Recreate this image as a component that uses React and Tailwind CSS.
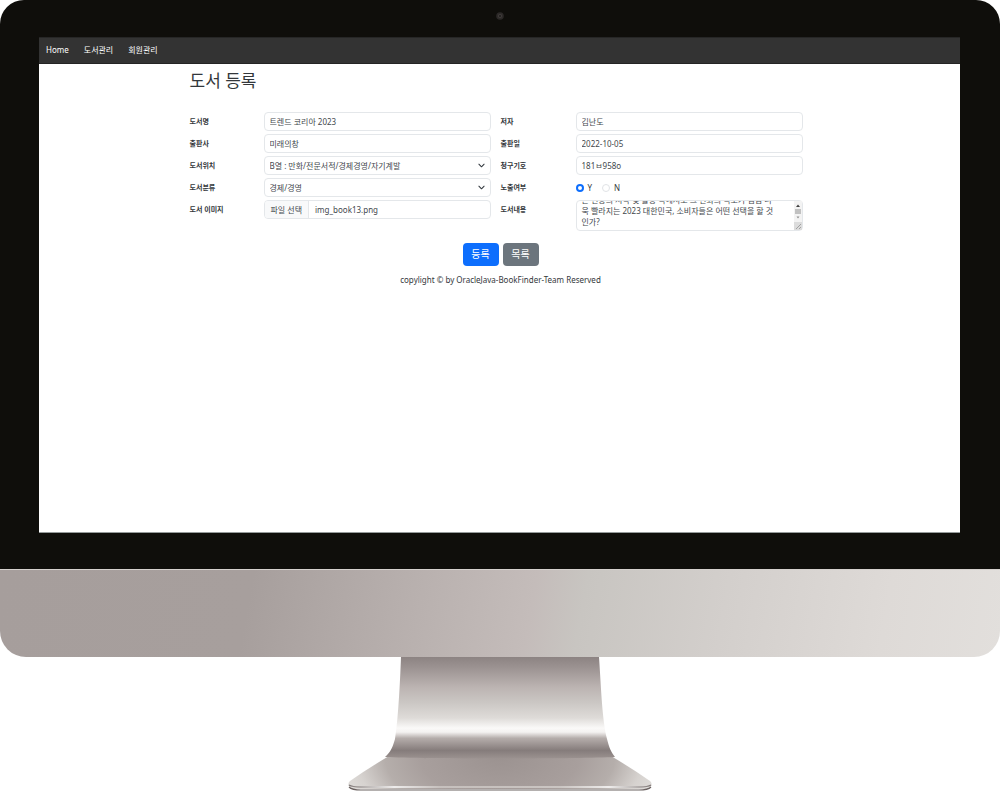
import { useEffect, useRef } from "react";

const control =
  "h-[19px] w-full min-w-0 rounded-[4px] border border-[#e4e7ea] bg-white px-[5px] text-[8px] leading-[12px] text-[#43484d]";

const description =
  "2023년 대한민국의 소비 트렌드를 전망한다.\n른 변동의 시작 및 활동 속에서도 그 변화의 속도가 점점 더\n욱 빨라지는 2023 대한민국, 소비자들은 어떤 선택을 할 것\n인가?";

function FieldLabel({ htmlFor, children }) {
  return (
    <label htmlFor={htmlFor} className="pt-[4px] text-[7px] leading-[12px] font-bold text-[#33373b]">
      {children}
    </label>
  );
}

function SelectField({ id, value }) {
  return (
    <div className="relative">
      <select id={id} defaultValue={value} className={`${control} block appearance-none pr-5`}>
        <option>{value}</option>
      </select>
      <svg viewBox="0 0 16 16" className="pointer-events-none absolute top-1.5 right-1.5 size-[7px]" fill="none" stroke="#343a40" strokeWidth="2.4" strokeLinecap="round" strokeLinejoin="round" aria-hidden="true">
        <path d="m2 5 6 6 6-6" />
      </svg>
    </div>
  );
}

function RadioOption({ id, label, defaultChecked }) {
  return (
    <div className="flex items-center gap-1">
      <input
        id={id}
        type="radio"
        name="visible"
        defaultChecked={defaultChecked}
        className="size-2 appearance-none rounded-full border border-[#e1e3e6] bg-white checked:border-2 checked:border-[#0d6efd]"
      />
      <label htmlFor={id} className="text-[8px] leading-[12px]">{label}</label>
    </div>
  );
}

function Description() {
  const ref = useRef(null);
  useEffect(() => {
    ref.current.scrollTop = ref.current.scrollHeight;
  }, []);
  return (
    <div className="relative">
      <textarea
        id="content"
        ref={ref}
        defaultValue={description}
        className="block h-[31px] w-full resize-none rounded-[4px] border border-[#e4e7ea] py-[3px] pr-[12px] pl-[5px] text-[8px] leading-[11px] text-[#43484d] [scrollbar-width:none]"
      />
      <svg viewBox="0 0 8 29" className="pointer-events-none absolute top-px right-px h-[29px] w-2" aria-hidden="true">
        <rect width="8" height="29" fill="#f3f3f3" />
        <path d="M2 6h4L4 3.500z" fill="#404040" />
        <rect x="1" y="8" width="6" height="5" fill="#c1c1c1" />
        <path d="M2.500 15.500h3L4 17.500z" fill="#909090" />
        <rect y="21" width="8" height="8" fill="#dcdcdc" />
        <path d="M2 28l5-5M5 28l2-2" stroke="#8a8a8a" strokeWidth=".7" />
      </svg>
    </div>
  );
}

function Navbar() {
  return (
    <nav className="flex h-[27px] items-center gap-[15px] border-y border-t-[#262626] border-b-[#242424] bg-[#333] px-[7px] pb-[2px] text-[8px] leading-[12px] text-white">
      <a href="#home">Home</a>
      <a href="#books">도서관리</a>
      <a href="#members">회원관리</a>
    </nav>
  );
}

function BookForm() {
  return (
    <form className="pr-[7px]">
      <div className="grid grid-cols-[64px_1fr_65px_1fr] gap-x-[10px] gap-y-[3px]">
        <FieldLabel htmlFor="title">도서명</FieldLabel>
        <input id="title" className={control} defaultValue="트렌드 코리아 2023" />
        <FieldLabel htmlFor="author">저자</FieldLabel>
        <input id="author" className={control} defaultValue="김난도" />

        <FieldLabel htmlFor="publisher">출판사</FieldLabel>
        <input id="publisher" className={control} defaultValue="미래의창" />
        <FieldLabel htmlFor="date">출판일</FieldLabel>
        <input id="date" className={control} defaultValue="2022-10-05" />

        <FieldLabel htmlFor="place">도서위치</FieldLabel>
        <SelectField id="place" value="B열 : 만화/전문서적/경제경영/자기계발" />
        <FieldLabel htmlFor="code">청구기호</FieldLabel>
        <input id="code" className={control} defaultValue="181ㅂ958o" />

        <FieldLabel htmlFor="category">도서분류</FieldLabel>
        <SelectField id="category" value="경제/경영" />
        <FieldLabel htmlFor="visible-y">노출여부</FieldLabel>
        <div className="flex items-center gap-[10px]">
          <RadioOption id="visible-y" label="Y" defaultChecked />
          <RadioOption id="visible-n" label="N" />
        </div>

        <FieldLabel htmlFor="image">도서 이미지</FieldLabel>
        <label className="flex h-[19px] overflow-hidden rounded-[4px] border border-[#e4e7ea] text-[8px] leading-[12px] text-[#43484d]">
          <input id="image" type="file" className="sr-only" />
          <span className="flex items-center border-r border-[#e4e7ea] bg-[#f8f9fa] px-[6px]">파일 선택</span>
          <span className="flex items-center px-[6px]">img_book13.png</span>
        </label>
        <FieldLabel htmlFor="content">도서내용</FieldLabel>
        <Description />
      </div>
    </form>
  );
}

function Stand() {
  return (
    <svg viewBox="0 0 306 134" className="mx-auto block h-[134px] w-[306px]" aria-hidden="true">
      <defs>
        <linearGradient id="neck" x1="0" y1="0" x2="0" y2="1">
          <stop offset="0" stopColor="#8c8382" />
          <stop offset=".1" stopColor="#9b9291" />
          <stop offset=".3" stopColor="#bcb4b2" />
          <stop offset=".45" stopColor="#cbc7c4" />
          <stop offset=".6" stopColor="#dedbd8" />
          <stop offset=".7" stopColor="#faf9f8" />
          <stop offset=".74" stopColor="#f4f2f1" />
          <stop offset=".8" stopColor="#b5adab" />
          <stop offset=".92" stopColor="#857c7b" />
          <stop offset="1" stopColor="#9b9290" />
        </linearGradient>
        <radialGradient id="foot" gradientUnits="userSpaceOnUse" cx="0" cy="0" r="1" gradientTransform="translate(153 98) scale(160 90)">
          <stop offset="0" stopColor="#9b9290" />
          <stop offset=".5" stopColor="#a89f9d" />
          <stop offset=".72" stopColor="#b5aeab" />
          <stop offset=".9" stopColor="#d6d2cf" />
          <stop offset="1" stopColor="#dedbd8" />
        </radialGradient>
        <linearGradient id="edge" x1="0" y1="0" x2="1" y2="0">
          <stop offset="0" stopColor="#817978" />
          <stop offset=".15" stopColor="#fff" />
          <stop offset=".3" stopColor="#d0cbc8" />
          <stop offset=".7" stopColor="#d6d2cf" />
          <stop offset=".86" stopColor="#fff" />
          <stop offset="1" stopColor="#817978" />
        </linearGradient>
      </defs>
      <path d="M42 99 Q20 112 3 124c-3 3-2 7 5 8h290c7-1 8-5 5-8Q286 112 264 99z" fill="url(#foot)" />
      <path d="M54 0h198c2 28 3 62 8 82 2 8 4 13 8 18-36 2-194 2-230 0 6-5 8-11 10-18 3-18 5-54 6-82z" fill="url(#neck)" />
      <path d="M2 128c3 2 7 2 12 2h278c6 0 9 0 12-2" fill="none" stroke="url(#edge)" strokeWidth="1.5" />
      <path d="M2 130c3 3 8 3 12 3h278c5 0 9 0 12-3" fill="none" stroke="#6b6261" strokeWidth="1.2" />
    </svg>
  );
}

export default function App() {
  return (
    <div className="min-h-screen bg-white font-['Noto_Sans','Noto_Sans_CJK_KR',sans-serif] text-[#33373b]">
      <div className="rounded-t-[24px] bg-[#0f0e0b] pr-[40px] pb-[36px] pl-[39px]">
        <div className="flex h-[37px] justify-center pt-3">
          <svg viewBox="0 0 8 8" className="size-2" aria-hidden="true">
            <circle cx="4" cy="4" r="3.800" fill="#2c2928" />
            <circle cx="4" cy="4" r="2" fill="#423d3c" />
            <circle cx="4" cy="4" r="1" fill="#1d1b1a" />
          </svg>
        </div>
        <div className="min-h-[496px] border-b border-[#969b9b] bg-white">
          <Navbar />
          <main className="mx-auto max-w-[620px]">
            <h1 className="pt-[4px] pb-[19px] text-[17px] leading-[25px]">도서 등록</h1>
            <BookForm />
            <div className="mt-3 flex justify-center gap-1 pl-[2px] text-[10px] leading-[15px] text-white">
              <button type="button" className="h-[23px] w-9 rounded-[4px] bg-[#0d6efd]">등록</button>
              <button type="button" className="h-[23px] w-9 rounded-[4px] bg-[#6c757d]">목록</button>
            </div>
          </main>
          <footer className="mt-2 pl-[2px] text-center text-[8px] leading-[12px]">
            copylight © by OracleJava-BookFinder-Team Reserved
          </footer>
        </div>
      </div>
      <div className="h-[88px] rounded-b-[26px] border-t border-[#d5d0ce] bg-[linear-gradient(100deg,#a69e9c_0%,#a79f9d_25%,#b9b1af_42%,#c4bcba_53%,#c8c5c1_58%,#d3cfcc_72%,#dedad7_88%,#e2dfdc_100%)]" />
      <Stand />
    </div>
  );
}
